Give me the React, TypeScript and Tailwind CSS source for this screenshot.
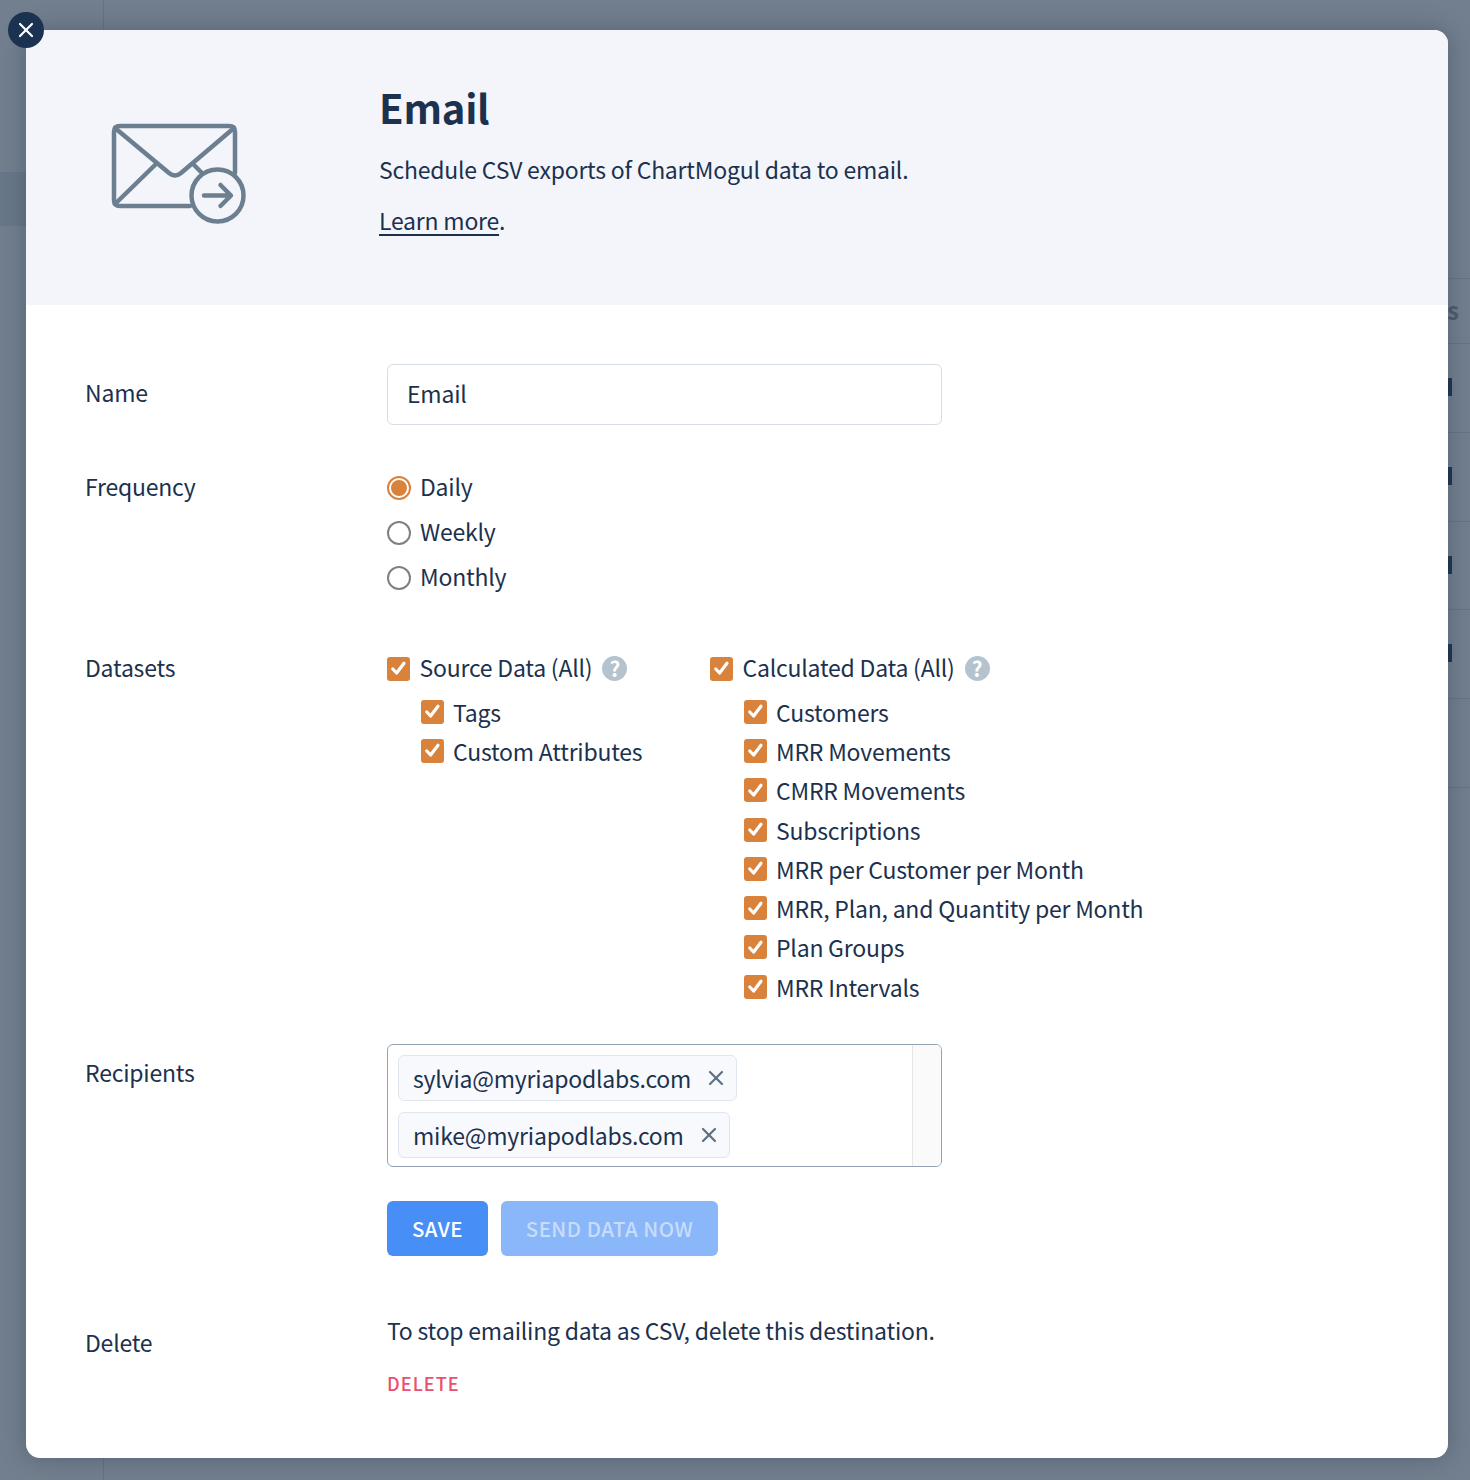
import { X } from "lucide-react";

const font = "font-['Noto_Sans_CJK_SC','Source_Sans_Pro','Noto_Sans',sans-serif]";

function Check({ className }: { className?: string }) {
  return (
    <span className={`flex h-[24px] w-[23px] shrink-0 items-center justify-center rounded-[3px] bg-[#d9823b] ${className ?? ""}`}>
      <svg width="17" height="17" viewBox="0 0 17 17" fill="none">
        <path d="M2.800 9 L6.600 13 L14 3.200" stroke="#fff" strokeWidth="3.200" strokeLinecap="round" strokeLinejoin="round" />
      </svg>
    </span>
  );
}

function Help() {
  return (
    <span className="ml-[10px] flex h-[25px] w-[25px] items-center justify-center rounded-full bg-[#b4c3ce] text-[21px] leading-[25px] font-bold text-white">
      ?
    </span>
  );
}

function Radio({ label, on }: { label: string; on?: boolean }) {
  return (
    <div className="flex h-[45px] items-center">
      {on ? (
        <span className="flex h-6 w-6 items-center justify-center rounded-full border-2 border-[#d9823b]">
          <span className="h-4 w-4 rounded-full bg-[#d9823b]" />
        </span>
      ) : (
        <span className="h-6 w-6 rounded-full border-2 border-[#808080]" />
      )}
      <span className="ml-[9px] -translate-y-[2px]">{label}</span>
    </div>
  );
}

function ParentCheck({ label }: { label: string }) {
  return (
    <div className="flex h-[47px] items-center">
      <Check />
      <span className="ml-[9.500px] -translate-y-[2px]">{label}</span>
      <Help />
    </div>
  );
}

function ChildChecks({ items }: { items: string[] }) {
  return (
    <div className="flex flex-col pl-[34px]">
      {items.map((item) => (
        <div key={item} className="flex h-[39.300px] items-center">
          <Check />
          <span className="ml-[9px] -translate-y-[0.500px]">{item}</span>
        </div>
      ))}
    </div>
  );
}

function Chip({ email }: { email: string }) {
  return (
    <div className="flex h-[46px] w-fit items-center rounded-[6px] border border-[#dfe6ee] bg-[#f8f9fd] pr-[8px] pl-[14px]">
      <span>{email}</span>
      <X className="ml-[13px] text-[#5d6f80]" size={24} strokeWidth={2.2} />
    </div>
  );
}

export default function App() {
  return (
    <div className={`relative h-[1480px] w-[1470px] overflow-hidden bg-[#727f8e] text-[23px] leading-[32px] tracking-[-0.22px] text-[#1c314e] ${font}`}>
      {/* page behind the overlay */}
      <div className="absolute top-0 left-[103px] h-full w-px bg-[#657485]" />
      <div className="absolute top-[172px] left-0 h-[54px] w-[103px] bg-[#687789]" />
      <div className="absolute top-[278px] right-0 h-[1px] w-[22px] bg-[#667586]" />
      <div className="absolute top-[343px] right-0 h-[1px] w-[22px] bg-[#667586]" />
      <div className="absolute top-[432px] right-0 h-[1px] w-[22px] bg-[#667586]" />
      <div className="absolute top-[521px] right-0 h-[1px] w-[22px] bg-[#667586]" />
      <div className="absolute top-[609px] right-0 h-[1px] w-[22px] bg-[#667586]" />
      <div className="absolute top-[698px] right-0 h-[1px] w-[22px] bg-[#667586]" />
      <div className="absolute top-[787px] right-0 h-[1px] w-[22px] bg-[#667586]" />
      <div className="absolute top-[298px] left-[1447px] text-[24px] leading-[24px] font-semibold text-[#4d5c6e]">s</div>
      <div className="absolute top-[378px] left-[1448px] h-[18px] w-[4px] bg-[#1f3550]" />
      <div className="absolute top-[467px] left-[1448px] h-[18px] w-[4px] bg-[#1f3550]" />
      <div className="absolute top-[556px] left-[1448px] h-[18px] w-[4px] bg-[#1f3550]" />
      <div className="absolute top-[644px] left-[1448px] h-[18px] w-[4px] bg-[#1f3550]" />

      {/* modal */}
      <div className="absolute top-[30px] left-[26px] h-[1428px] w-[1422px] overflow-hidden rounded-[14px] bg-white shadow-[0_0_24px_rgba(30,45,65,0.35)]">
        <header className="flex h-[275px] bg-[#f3f5fb]">
          <div className="w-[353px] shrink-0 pt-[92px] pl-[84px]">
            <svg width="138" height="104" viewBox="0 0 138 104" fill="none" stroke="#6b7f91" strokeWidth="4.500" strokeLinecap="round" strokeLinejoin="round">
              <path d="M80 84 H10 Q4 84 4 78 V10 Q4 4 10 4 H119 Q125 4 125 10 V51" />
              <path d="M5 6 L59 51 Q65 56 71 51 L124 6" />
              <path d="M5 82 L46 42" />
              <path d="M83 42 L91 50" />
              <circle cx="107.500" cy="73.500" r="26" />
              <path d="M94 73.500 H120 M110.500 63 L121 73.500 L110.500 84" />
            </svg>
          </div>
          <div className="pt-[48px]">
            <h1 className="text-[40px] leading-[58px] font-semibold">Email</h1>
            <p className="mt-[17px]">Schedule CSV exports of ChartMogul data to email.</p>
            <p className="mt-[19px]">
              <span className="underline underline-offset-[4px]">Learn more</span>.
            </p>
          </div>
        </header>

        <div className="pl-[59px]">
          {/* name */}
          <div className="mt-[59px] grid grid-cols-[302px_555px] items-center">
            <div className="-translate-y-[3px]">Name</div>
            <div className="flex h-[61px] items-center rounded-[6px] border border-[#d7dde4] pb-[3px] pl-[19px]">Email</div>
          </div>

          {/* frequency */}
          <div className="mt-[40px] grid grid-cols-[302px_555px]">
            <div className="pt-[5px]">Frequency</div>
            <div>
              <Radio label="Daily" on />
              <Radio label="Weekly" />
              <Radio label="Monthly" />
            </div>
          </div>

          {/* datasets */}
          <div className="mt-[45px] grid grid-cols-[302px_1fr]">
            <div className="pt-[6px]">Datasets</div>
            <div className="flex">
              <div className="w-[323px]">
                <ParentCheck label="Source Data (All)" />
                <ChildChecks items={["Tags", "Custom Attributes"]} />
              </div>
              <div>
                <ParentCheck label="Calculated Data (All)" />
                <ChildChecks
                  items={[
                    "Customers",
                    "MRR Movements",
                    "CMRR Movements",
                    "Subscriptions",
                    "MRR per Customer per Month",
                    "MRR, Plan, and Quantity per Month",
                    "Plan Groups",
                    "MRR Intervals",
                  ]}
                />
              </div>
            </div>
          </div>

          {/* recipients */}
          <div className="mt-[38px] grid grid-cols-[302px_555px]">
            <div className="pt-[12px]">Recipients</div>
            <div>
              <div className="flex h-[123px] overflow-hidden rounded-[6px] border border-[#94a3b3]">
                <div className="flex flex-1 flex-col gap-[11px] pt-[10px] pl-[10px]">
                  <Chip email="sylvia@myriapodlabs.com" />
                  <Chip email="mike@myriapodlabs.com" />
                </div>
                <div className="w-[29px] border-l border-[#e6e6e6] bg-[#fafafa]" />
              </div>
              <div className="mt-[34px] flex gap-[13px] text-[20.400px] font-medium tracking-[0.5px]">
                <button className="h-[55px] w-[101px] rounded-[6px] bg-[#478ff6] pb-[2px] text-white">SAVE</button>
                <button className="h-[55px] w-[217px] rounded-[6px] bg-[#8ab7f9] pb-[2px] text-[#c8dcfb]">SEND DATA NOW</button>
              </div>
            </div>
          </div>

          {/* delete */}
          <div className="mt-[58px] grid grid-cols-[302px_1fr]">
            <div className="pt-[12px]">Delete</div>
            <div>
              <p>To stop emailing data as CSV, delete this destination.</p>
              <div className="mt-[23px] text-[18.200px] leading-[28px] font-medium tracking-[1px] text-[#e8506f]">DELETE</div>
            </div>
          </div>
        </div>
      </div>

      {/* close button */}
      <div className="absolute top-[12px] left-[8px] flex h-9 w-9 items-center justify-center rounded-full bg-[#1b3350]">
        <X className="text-white" size={24} strokeWidth={2.2} />
      </div>
    </div>
  );
}
